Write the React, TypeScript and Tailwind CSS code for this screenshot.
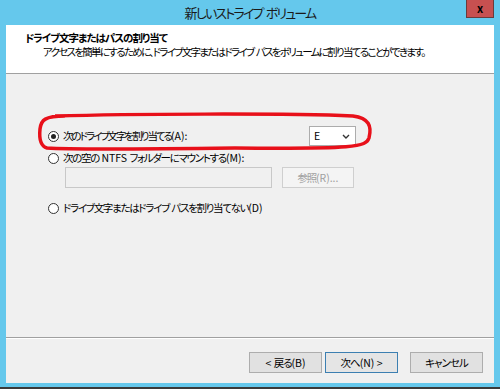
const font = "font-['Noto_Sans_CJK_JP','Noto_Sans',sans-serif] [font-feature-settings:'palt']";

// ASCII runs keep normal spacing, Japanese runs take the parent's tight tracking
function J({text}: {text: string}) {
  const parts = text.split(/([\x20-\x7e]+)/).filter(Boolean);
  return (
    <>
      {parts.map((p, i) =>
        /^[\x20-\x7e]+$/.test(p) ? (
          <span key={i} className="whitespace-pre tracking-[0px]">
            {p}
          </span>
        ) : (
          <span key={i}>{p}</span>
        ),
      )}
    </>
  );
}

function Radio({checked}: {checked?: boolean}) {
  return (
    <span className="flex h-[11px] w-[11px] shrink-0 items-center justify-center rounded-full border border-[#333] bg-white">
      {checked && <span className="h-[5px] w-[5px] rounded-full bg-[#222]" />}
    </span>
  );
}

function Button({label, focused}: {label: string; focused?: boolean}) {
  return (
    <button
      className={`flex h-[21px] w-[73px] items-center justify-center border text-[10.5px] tracking-[-1px] text-black ${
        focused ? "border-[#3c7fb1] bg-[#e5e5e5]" : "border-[#adadad] bg-[#e1e1e1]"
      }`}
    >
      <J text={label} />
    </button>
  );
}

export default function App() {
  return (
    <div className={`relative flex h-[389px] w-[500px] flex-col bg-[#65c8ec] ${font}`}>
      <div className="flex h-[25px] items-center justify-center text-[13px] tracking-[-1.8px] text-[#1a1a1a]">
        <J text="新しいストライプ ボリューム" />
      </div>
      <div className="absolute right-[6px] top-0 flex h-[18px] w-[28px] items-center justify-center border border-t-0 border-[#6b3b3b] bg-[#c75050] text-[11px] font-bold text-black">
        x
      </div>

      <div className="mx-[6px] flex h-[358px] flex-col bg-[#f0f0f0]">
        <div className="flex h-[49px] flex-col border-b border-[#a0a0a0] bg-white pl-[19px] pt-[6px] text-[10.5px] leading-[14px] text-black">
          <div className="font-bold tracking-[-1px]">ドライブ文字またはパスの割り当て</div>
          <div className="whitespace-nowrap pl-[18px] tracking-[-1.7px]">
            <J text="アクセスを簡単にするために、ドライブ文字またはドライブ パスをボリュームに割り当てることができます。" />
          </div>
        </div>

        <div className="relative flex flex-1 flex-col pl-[42px] pt-[52px] text-[10.5px] tracking-[-1.3px] text-black">
          <div className="flex h-[20px] items-center">
            <Radio checked />
            <span className="ml-[4px] w-[246px] shrink-0 tracking-[-2px]">
              <J text="次のドライブ文字を割り当てる(A):" />
            </span>
            <div className="flex h-[20px] w-[47px] shrink-0 items-center justify-between border border-[#acacac] bg-white pl-[4px] pr-[5px]">
              <span>E</span>
              <svg width="8" height="5" viewBox="0 0 8 5">
                <path d="M1 1 L4 4 L7 1" fill="none" stroke="#333" strokeWidth="1.4" />
              </svg>
            </div>
          </div>
          <div className="mt-[5px] flex h-[14px] items-center">
            <Radio />
            <span className="ml-[4px]">
              <J text="次の空の NTFS フォルダーにマウントする(M):" />
            </span>
          </div>
          <div className="mt-[2px] flex items-center pl-[17px]">
            <div className="h-[21px] w-[207px] border border-[#c8c8c8] bg-[#f0f0f0]" />
            <div className="ml-[10px] flex h-[21px] w-[72px] items-center justify-center border border-[#cfcfcf] bg-[#f4f4f4] text-[#a0a0a0]">
              <J text="参照(R)..." />
            </div>
          </div>
          <div className="mt-[13px] flex h-[14px] items-center">
            <Radio />
            <span className="ml-[4px]">
              <J text="ドライブ文字またはドライブ パスを割り当てない(D)" />
            </span>
          </div>

          <svg className="absolute left-[29px] top-[38px]" width="340" height="42" viewBox="0 0 340 42">
            <path
              d="M20 4 C 90 2, 250 1, 318 4 C 334 6, 337 14, 334 26 C 331 35, 320 37, 200 36 C 120 37, 40 38, 12 36 C 5 34, 4 27, 5 17 C 6 8, 10 4, 30 4"
              fill="none"
              stroke="#e8101a"
              strokeWidth="3.5"
            />
          </svg>
        </div>

        <div className="h-[2px] border-t border-[#a0a0a0] bg-white" />
        <div className="flex h-[44px] items-start justify-end pr-[11px] pt-[13px]">
          <Button label="< 戻る(B)" />
          <div className="ml-[3px]">
            <Button label="次へ(N) >" focused />
          </div>
          <div className="ml-[12px]">
            <Button label="キャンセル" />
          </div>
        </div>
      </div>
      <div className="mt-auto h-[2px] bg-[#3a3a3a]" />
    </div>
  );
}
